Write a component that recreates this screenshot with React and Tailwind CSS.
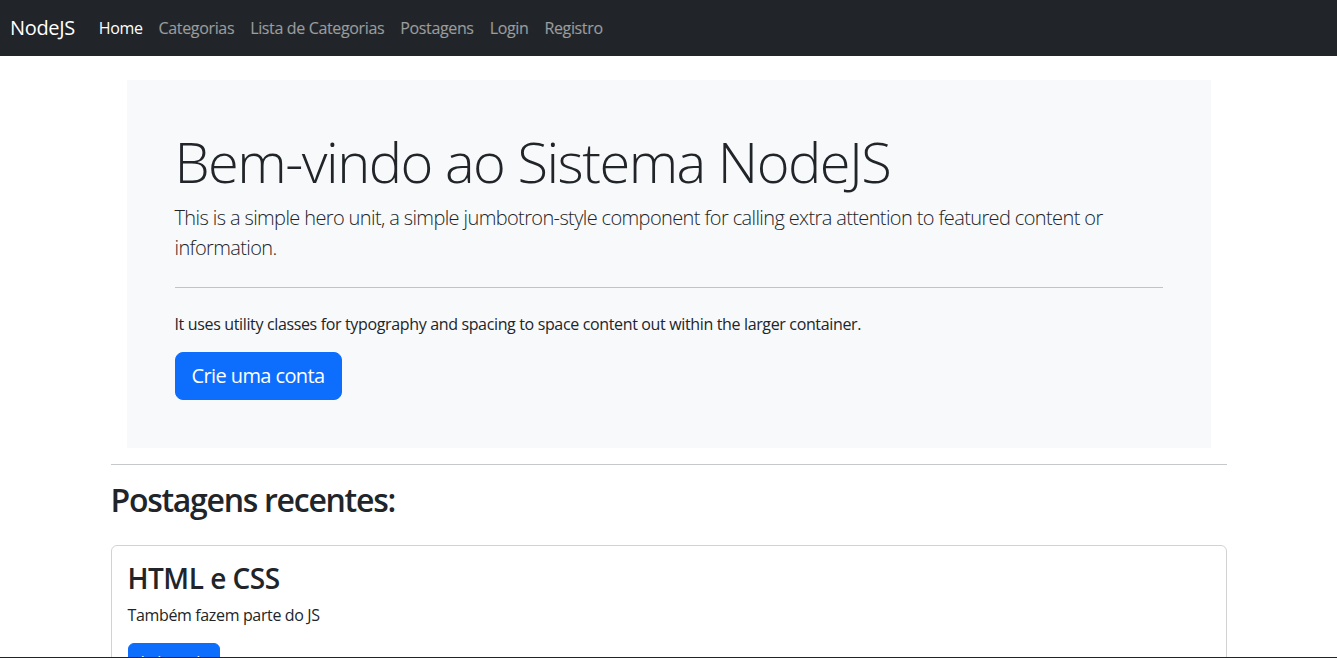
import React from 'react';

const links = ['Categorias', 'Lista de Categorias', 'Postagens', 'Login', 'Registro'];

const App = () => {
  return (
    <div className="min-h-screen bg-white text-[#212529] font-['Open_Sans',sans-serif] tracking-[-0.022em]">
      <nav className="h-[56px] bg-[#212529] flex items-center px-[10px]">
        <a href="#" className="text-[20px] leading-[30px] text-white mr-[16px]">
          NodeJS
        </a>
        <ul className="flex">
          <li>
            <a href="#" className="block px-[8px] text-[16px] leading-[24px] text-white">
              Home
            </a>
          </li>
          {links.map((l) => (
            <li key={l}>
              <a href="#" className="block px-[8px] text-[16px] leading-[24px] text-white/55">
                {l}
              </a>
            </li>
          ))}
        </ul>
      </nav>

      <main className="max-w-[1140px] mx-auto px-[12px]">
        <div className="mt-[24px] mx-[16px] bg-[#f8f9fa] p-[48px]">
          <h1 className="text-[56px] font-light leading-[1.2] mb-[8px] tracking-[-0.027em]">
            Bem-vindo ao Sistema NodeJS
          </h1>
          <p className="text-[20px] font-light leading-[30px] tracking-[-0.031em]">
            This is a simple hero unit, a simple jumbotron-style component for calling extra attention to featured content or information.
          </p>
          <hr className="my-[24px] border-t border-[#212529]/25" />
          <p className="text-[16px] leading-[24px] mb-[16px]">
            It uses utility classes for typography and spacing to space content out within the larger container.
          </p>
          <button className="px-[16px] py-[8px] text-[20px] leading-[30px] rounded-[8px] border border-[#0d6efd] bg-[#0d6efd] text-white tracking-[-0.03em]">
            Crie uma conta
          </button>
        </div>

        <hr className="my-[16px] border-t border-[#212529]/25" />

        <h2 className="text-[32px] font-semibold leading-[1.2] mb-[25px] tracking-[-0.04em]">Postagens recentes:</h2>

        <div className="border border-black/[0.175] rounded-[6px]">
          <div className="p-[16px]">
            <h3 className="text-[28px] font-semibold leading-[1.2] mb-[8px] tracking-[-0.018em]">HTML e CSS</h3>
            <p className="text-[16px] leading-[24px] mb-[16px]">Também fazem parte do JS</p>
            <a href="#" className="inline-block px-[12px] py-[6px] text-[16px] leading-[24px] rounded-[6px] border border-[#0d6efd] bg-[#0d6efd] text-white">
              Leia mais
            </a>
          </div>
        </div>
        <div className="h-[40px]" />
      </main>
      <div className="fixed bottom-0 inset-x-0 h-px bg-[#1e2530]" />
    </div>
  );
};

export default App;
